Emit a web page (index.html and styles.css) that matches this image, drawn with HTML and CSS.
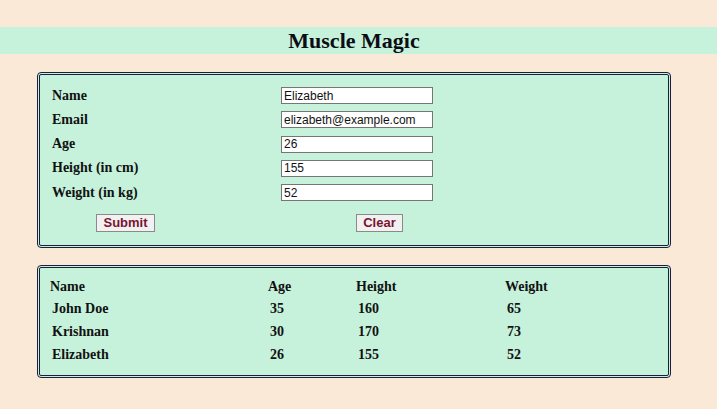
FILE: index.html
```html
<!DOCTYPE html>
<html>
<head>
<meta charset="utf-8">
<link rel="stylesheet" href="styles.css">
</head>
<body>
<h1 class="title">Muscle Magic</h1>
<form class="box form-box">
  <div class="fields">
    <label class="lbl">Name</label><input class="inp" type="text" value="Elizabeth">
    <label class="lbl">Email</label><input class="inp" type="text" value="elizabeth@example.com">
    <label class="lbl">Age</label><input class="inp" type="text" value="26">
    <label class="lbl">Height (in cm)</label><input class="inp" type="text" value="155">
    <label class="lbl">Weight (in kg)</label><input class="inp" type="text" value="52">
  </div>
  <div class="actions">
    <button type="button" class="btn btn-submit">Submit</button>
    <button type="button" class="btn btn-clear">Clear</button>
  </div>
</form>
<div class="box table-box">
  <table class="tbl">
    <thead>
      <tr><th class="c1">Name</th><th class="c2">Age</th><th class="c3">Height</th><th class="c4">Weight</th></tr>
    </thead>
    <tbody>
      <tr><td>John Doe</td><td>35</td><td>160</td><td>65</td></tr>
      <tr><td>Krishnan</td><td>30</td><td>170</td><td>73</td></tr>
      <tr><td>Elizabeth</td><td>26</td><td>155</td><td>52</td></tr>
    </tbody>
  </table>
</div>
</body>
</html>
```

FILE: styles.css
```css
html, body {
  margin: 0;
  padding: 0;
  background: #fbe9d7;
  font-family: "Liberation Serif", "Times New Roman", serif;
  color: #111;
}
.title {
  margin: 27px 0 0 0;
  height: 27px;
  line-height: 27px;
  background: #c6f2dc;
  text-align: center;
  font-size: 22px;
  font-weight: bold;
  padding-right: 9px;
  color: #0c0c14;
}
.box {
  background: #c6f2dc;
  border: 3px double #1d1d3d;
  border-radius: 4px;
  width: 628px;
  margin-left: 37px;
}
.form-box {
  margin-top: 18px;
  padding: 12px 0 13px 12px;
  width: 616px;
}
.fields {
  display: grid;
  grid-template-columns: 229px 152px;
  grid-auto-rows: 17px;
  row-gap: 7.25px;
  align-items: center;
}
.lbl {
  font-size: 14px;
  font-weight: bold;
}
.inp {
  box-sizing: border-box;
  width: 152px;
  height: 17px;
  margin: 0;
  padding: 0 2px;
  border: 1px solid #767676;
  background: #fff;
  font-family: "Liberation Sans", Arial, sans-serif;
  font-size: 12px;
  color: #111;
  outline: none;
}
.actions {
  display: flex;
  margin-top: 13px;
  padding-left: 44px;
}
.btn {
  box-sizing: border-box;
  height: 18px;
  padding: 0 6px;
  margin: 0;
  border: 1px solid #8a8a8a;
  background: #f1f1f1;
  font-family: "Liberation Sans", Arial, sans-serif;
  font-size: 13px;
  font-weight: bold;
  color: #7a1430;
  line-height: 16px;
}
.btn-submit { width: 59px; }
.btn-clear { width: 47px; margin-left: 201px; }
.table-box {
  margin-top: 17px;
  padding: 8px 0 9px 10px;
  width: 618px;
}
.tbl {
  border-collapse: collapse;
  font-size: 14px;
  font-weight: bold;
}
.tbl th, .tbl td {
  padding: 0;
  text-align: left;
}
.tbl th { height: 21px; }
.tbl td { height: 23px; padding-left: 2px; }
.c1 { width: 218px; }
.c2 { width: 88px; }
.c3 { width: 149px; }
.c4 { width: 100px; }
```
